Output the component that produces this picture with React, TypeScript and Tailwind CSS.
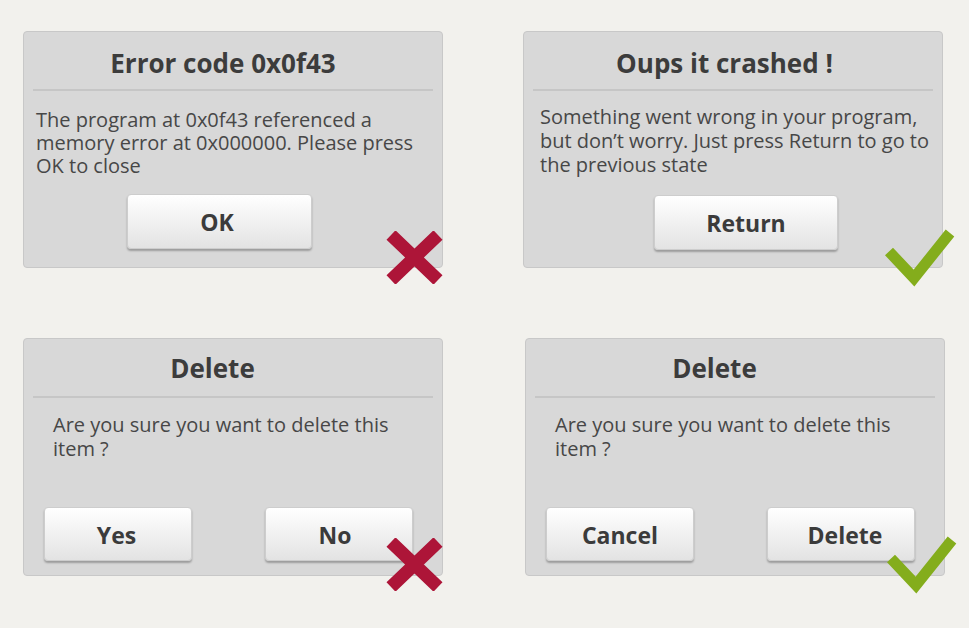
import type { ReactNode } from 'react'

const FONT = { fontFamily: '"Open Sans", "Noto Sans", sans-serif' }

function Cross() {
  return (
    <svg width="57" height="53" viewBox="0 0 57 53" className="absolute left-[362px] top-[199px]">
      <path d="M5 4 L52 49 M52 4 L5 49" stroke="#ad1538" strokeWidth="13" strokeLinecap="butt" fill="none" />
    </svg>
  )
}

function Check() {
  return (
    <svg width="70" height="60" viewBox="0 0 70 60" className="absolute left-[361px] top-[196px]">
      <polyline
        points="4,23.5 29,50 65,5"
        stroke="#84ad1c"
        strokeWidth="11"
        strokeLinecap="butt"
        strokeLinejoin="miter"
        fill="none"
      />
    </svg>
  )
}

function Button({ children, className }: { children: ReactNode; className: string }) {
  return (
    <div
      className={`flex items-center justify-center pt-[2px] rounded-[4px] border border-[#cdcdcd] bg-linear-to-b from-white to-[#e3e3e3] text-[23px] font-bold text-[#3b3b3b] shadow-[0_2px_2px_rgba(0,0,0,0.28)] ${className}`}
    >
      {children}
    </div>
  )
}

interface DialogProps {
  title: string
  titleClass: string
  sepClass: string
  bodyClass: string
  lines: string[]
  children: ReactNode
  mark: 'cross' | 'check'
  className?: string
}

function Dialog({ title, titleClass, sepClass, bodyClass, lines, children, mark, className = '' }: DialogProps) {
  return (
    <div
      className={`relative flex flex-col w-[420px] rounded-[4px] border border-[#c8c8c8] bg-[#d8d8d8] ${className}`}
    >
      <div className={`text-center text-[26px] font-bold leading-[30px] text-[#3c3c3c] ${titleClass}`}>{title}</div>
      <div className={`mx-[9px] h-[2px] bg-[#c6c6c6] ${sepClass}`} />
      <div className={`text-[20px] text-[#474747] whitespace-nowrap ${bodyClass}`}>
        {lines.map((l, i) => (
          <div key={i}>{l}</div>
        ))}
      </div>
      {children}
      {mark === 'cross' ? <Cross /> : <Check />}
    </div>
  )
}

export default function App() {
  return (
    <div className="w-full h-screen bg-[#f2f1ed] pt-[31px] pl-[23px]" style={FONT}>
      <div className="grid grid-cols-[420px_420px] gap-x-[80px] gap-y-[70px]">
        <Dialog
          className="h-[237px]"
          title="Error code 0x0f43"
          titleClass="mt-[16px] pr-[20px]"
          sepClass="mt-[11px]"
          bodyClass="mt-[17px] pl-[12px] leading-[23px]"
          lines={['The program at 0x0f43 referenced a', 'memory error at 0x000000. Please press', 'OK to close']}
          mark="cross"
        >
          <Button className="mt-[17px] ml-[103px] w-[185px] h-[55px] pr-[5px]">OK</Button>
        </Dialog>

        <Dialog
          className="h-[237px]"
          title="Oups it crashed !"
          titleClass="mt-[16px] pr-[17px]"
          sepClass="mt-[11px]"
          bodyClass="mt-[14px] pl-[16px] leading-[24px]"
          lines={['Something went wrong in your program,', 'but don’t worry. Just press Return to go to', 'the previous state']}
          mark="check"
        >
          <Button className="mt-[18px] ml-[130px] w-[184px] h-[55px]">Return</Button>
        </Dialog>

        <Dialog
          className="h-[238px]"
          title="Delete"
          titleClass="mt-[14px] pr-[41px]"
          sepClass="mt-[13px]"
          bodyClass="mt-[15px] pl-[29px] leading-[24px]"
          lines={['Are you sure you want to delete this', 'item ?']}
          mark="cross"
        >
          <div className="mt-[46px] pl-[20px] flex gap-[73px]">
            <Button className="w-[148px] h-[54px] pr-[3px]">Yes</Button>
            <Button className="w-[148px] h-[54px] pr-[8px]">No</Button>
          </div>
        </Dialog>

        <Dialog
          className="h-[238px] ml-[2px]"
          title="Delete"
          titleClass="mt-[14px] pr-[41px]"
          sepClass="mt-[13px]"
          bodyClass="mt-[15px] pl-[29px] leading-[24px]"
          lines={['Are you sure you want to delete this', 'item ?']}
          mark="check"
        >
          <div className="mt-[46px] pl-[20px] flex gap-[73px]">
            <Button className="w-[148px] h-[54px]">Cancel</Button>
            <Button className="w-[148px] h-[54px] pl-[8px]">Delete</Button>
          </div>
        </Dialog>
      </div>
    </div>
  )
}
